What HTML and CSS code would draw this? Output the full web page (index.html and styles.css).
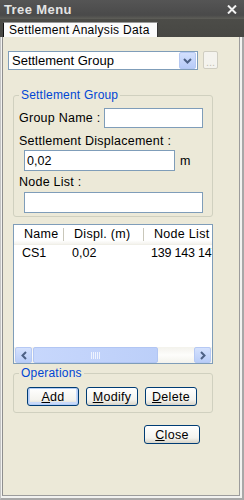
FILE: index.html
```html
<!DOCTYPE html>
<html>
<head>
  <title>Tree Menu</title>
  <link rel="stylesheet" href="styles.css">
</head>
<body>
  <div class="window">
    <div class="titlebar">
      <span class="title">Tree Menu</span>
      <svg class="close-x" width="10" height="9" viewBox="0 0 10 9">
        <path d="M1 0.5 L9 8.5 M9 0.5 L1 8.5" stroke="#f2f2f2" stroke-width="2"/>
      </svg>
    </div>
    <div class="tabstrip">
      <div class="tab">Settlement Analysis Data</div>
    </div>

    <div class="frame">
      <div class="panel">
        <div class="combo-row">
          <div class="combo">
            <span class="combo-text">Settlement Group</span>
            <span class="combo-btn">
              <svg width="9" height="6" viewBox="0 0 9 6">
                <path d="M1 1 L4.5 4.5 L8 1" fill="none" stroke="#4d6185" stroke-width="2"/>
              </svg>
            </span>
          </div>
          <button class="dots" disabled>...</button>
        </div>

        <fieldset class="group">
          <legend>Settlement Group</legend>
          <div class="row">
            <label for="groupName">Group Name :</label>
            <input class="txt name-input" id="groupName" type="text">
          </div>
          <div class="label-line first-label">Settlement Displacement :</div>
          <div class="row indent">
            <input class="txt disp-input" type="text" value="0,02">
            <span class="unit">m</span>
          </div>
          <div class="label-line next-label">Node List :</div>
          <div class="row indent">
            <input class="txt node-input" type="text">
          </div>
        </fieldset>

        <div class="listview">
          <div class="lv-head">
            <div class="col col-name hd">Name</div>
            <div class="col col-disp hd">Displ. (m)</div>
            <div class="col col-node hd">Node List</div>
          </div>
          <div class="lv-body">
            <div class="lv-row">
              <div class="col col-name cell">CS1</div>
              <div class="col col-disp cell">0,02</div>
              <div class="col col-node cell">139 143 147</div>
            </div>
          </div>
          <div class="hscroll">
            <span class="sb-btn">
              <svg width="6" height="9" viewBox="0 0 6 9"><path d="M5 1 L1.5 4.5 L5 8" fill="none" stroke="#4d6185" stroke-width="2"/></svg>
            </span>
            <span class="sb-thumb">
              <svg width="9" height="7" viewBox="0 0 9 7"><path d="M0.5 0 V7 M2.5 0 V7 M4.5 0 V7 M6.5 0 V7 M8.5 0 V7" stroke="#eef3fe" stroke-width="1"/></svg>
            </span>
            <span class="sb-track"></span>
            <span class="sb-btn">
              <svg width="6" height="9" viewBox="0 0 6 9"><path d="M1 1 L4.5 4.5 L1 8" fill="none" stroke="#4d6185" stroke-width="2"/></svg>
            </span>
          </div>
        </div>

        <fieldset class="ops">
          <legend>Operations</legend>
          <div class="btn-row">
            <button class="btn focused"><u>A</u>dd</button>
            <button class="btn"><u>M</u>odify</button>
            <button class="btn"><u>D</u>elete</button>
          </div>
        </fieldset>

        <div class="close-row">
          <button class="btn close-btn"><u>C</u>lose</button>
        </div>
      </div>
    </div>
  </div>
</body>
</html>
```

FILE: styles.css
```css
body {
  margin: 0;
  padding: 0;
  font-family: "Liberation Sans", Arial, sans-serif;
  font-size: 12px;
  color: #000;
}

.window {
  width: 244px;
  height: 500px;
  display: flex;
  flex-direction: column;
  background-color: #4b4b4b;
}

.titlebar {
  height: 19px;
  display: flex;
  align-items: center;
  justify-content: space-between;
  padding: 0 7px 0 4px;
  background: linear-gradient(#555555, #4a4a4a 80%, #5e5e58);
}

.title {
  color: #e4e4e4;
  font-weight: bold;
  font-size: 13px;
  letter-spacing: 0.4px;
}

.tabstrip {
  height: 18px;
  display: flex;
  align-items: flex-end;
  padding-left: 3px;
  background: linear-gradient(#4c4c48, #474743);
}

.tab {
  height: 14px;
  width: 148px;
  padding-left: 5px;
  line-height: 14px;
  background-color: #fbfbfb;
  border-left: 1px solid #111;
  border-top: 1px solid #9a9a9a;
  border-right: 1px solid #333;
  letter-spacing: 0.3px;
}

.frame {
  flex: 1;
  display: flex;
  background-color: #f2f2f0;
  border-left: 1px solid #c4c4c4;
  border-right: 2px solid #a8a8a8;
  border-bottom: 2px solid #a8a8a8;
  padding: 0 2px 2px 1px;
}

.panel {
  flex: 1;
  background-color: #ece9d8;
  border-left: 1px solid #8e8e8e;
  border-right: 1px solid #9c9c9c;
  border-bottom: 1px solid #9c9c9c;
}

/* combo box */
.combo-row {
  display: flex;
  margin: 14px 0 0 5px;
}

.combo {
  width: 187px;
  height: 17px;
  border: 1px solid #7f9db9;
  background-color: #fff;
  display: flex;
  align-items: center;
  justify-content: space-between;
  padding-right: 1px;
}

.combo-text {
  padding-left: 3px;
  font-size: 13px;
}

.combo-btn {
  width: 15px;
  height: 15px;
  display: flex;
  align-items: center;
  justify-content: center;
  background: linear-gradient(#d3e0fd, #b7cbf8);
  border: 1px solid #b5c8f2;
  border-radius: 2px;
}

.dots {
  width: 15px;
  height: 18px;
  margin-left: 5px;
  padding: 0;
  font-family: "Liberation Sans", Arial, sans-serif;
  font-size: 11px;
  color: #c4c2b4;
  background-color: #f4f3ee;
  border: 1px solid #cfcdc1;
  border-radius: 2px;
  line-height: 20px;
}

/* group boxes */
fieldset {
  margin: 0;
  border: 1px solid #d0d0bf;
  border-radius: 3px;
}

legend {
  color: #0046d5;
  line-height: 15px;
  padding: 0 2px;
  letter-spacing: 0.2px;
}

.group {
  width: 188px;
  margin: 18px 0 0 10px;
  padding: 5px 5px 3px 5px;
}

.row {
  display: flex;
  align-items: center;
  letter-spacing: 0.25px;
}

.row label {
  font-size: 12.5px;
}

.indent {
  padding-left: 5px;
}

.label-line {
  line-height: 14px;
  font-size: 12.5px;
  letter-spacing: 0.25px;
}

.first-label {
  margin-top: 6px;
}

.next-label {
  margin-top: 4px;
}

.txt {
  box-sizing: border-box;
  height: 20px;
  margin: 0;
  padding: 0 2px;
  border: 1px solid #7f9db9;
  background-color: #fff;
  font-family: "Liberation Sans", Arial, sans-serif;
  font-size: 12.5px;
  outline: none;
}

.name-input {
  width: 99px;
  margin-left: auto;
  margin-right: 4px;
}

.disp-input {
  width: 151px;
  height: 21px;
  margin-top: 2px;
}

.unit {
  margin-left: 5px;
  margin-top: 3px;
  font-size: 12.5px;
}

.node-input {
  width: 179px;
  height: 21px;
  margin-top: 3px;
}

/* list view */
.listview {
  width: 198px;
  height: 138px;
  margin: 7px 0 0 10px;
  border: 1px solid #7f9db9;
  background-color: #fff;
  display: flex;
  flex-direction: column;
}

.lv-head {
  height: 19px;
  display: flex;
  align-items: center;
  border-bottom: 1px solid #f0efe8;
  background: linear-gradient(#ffffff, #ffffff 80%, #f4f3ee);
}

.lv-body {
  flex: 1;
  overflow: hidden;
}

.lv-row {
  display: flex;
  height: 14px;
  margin-top: 1px;
  line-height: 14px;
}

.col {
  white-space: nowrap;
  overflow: hidden;
  box-sizing: border-box;
  flex-shrink: 0;
}

.col-name {
  width: 50px;
}

.col-disp {
  width: 80px;
}

.col-node {
  width: 68px;
}

.hd {
  height: 19px;
  line-height: 19px;
  padding-left: 10px;
  font-size: 12.5px;
  letter-spacing: 0.3px;
  background: linear-gradient(#c9c7ba, #c9c7ba) right 3px / 1px 13px no-repeat;
}

.hd.col-node {
  background: none;
}

.cell {
  padding-left: 8px;
  font-size: 12.5px;
}

.cell.col-node {
  padding-left: 7px;
  letter-spacing: -0.2px;
}

.hscroll {
  height: 16px;
  display: flex;
  background: linear-gradient(#f3f2ec, #fdfdfb 50%, #f3f2ec);
}

.sb-btn {
  width: 15px;
  height: 14px;
  margin: 0 1px;
  display: flex;
  align-items: center;
  justify-content: center;
  background: linear-gradient(#d4e1fd, #b9cdf8);
  border: 1px solid #b6c9f4;
  border-radius: 2px;
}

.sb-thumb {
  width: 123px;
  height: 14px;
  display: flex;
  align-items: center;
  justify-content: center;
  background: linear-gradient(90deg, #c7d7fc, #bccff9);
  border: 1px solid #b2c6f3;
  border-radius: 2px;
}

.sb-track {
  flex: 1;
}

/* operations */
.ops {
  width: 188px;
  margin: 2px 0 0 10px;
  padding: 7px 5px 6px 5px;
}

.ops legend {
  line-height: 14px;
}

.btn-row {
  display: flex;
  gap: 7px;
  margin-left: 8px;
}

.btn {
  width: 52px;
  height: 19px;
  padding: 0;
  font-family: "Liberation Sans", Arial, sans-serif;
  font-size: 12.5px;
  letter-spacing: 0.3px;
  color: #000;
  border: 1px solid #003c74;
  border-radius: 3px;
  background: linear-gradient(#ffffff, #f4f3ee 70%, #d8d4c8);
  line-height: 16px;
}

.btn.focused {
  box-shadow: inset 0 0 0 1px #b4cdf6, inset 0 -1px 0 2px #c9dafa;
}

.close-row {
  display: flex;
  justify-content: flex-end;
  margin: 12px 39px 0 0;
}

.close-btn {
  width: 56px;
}
```
